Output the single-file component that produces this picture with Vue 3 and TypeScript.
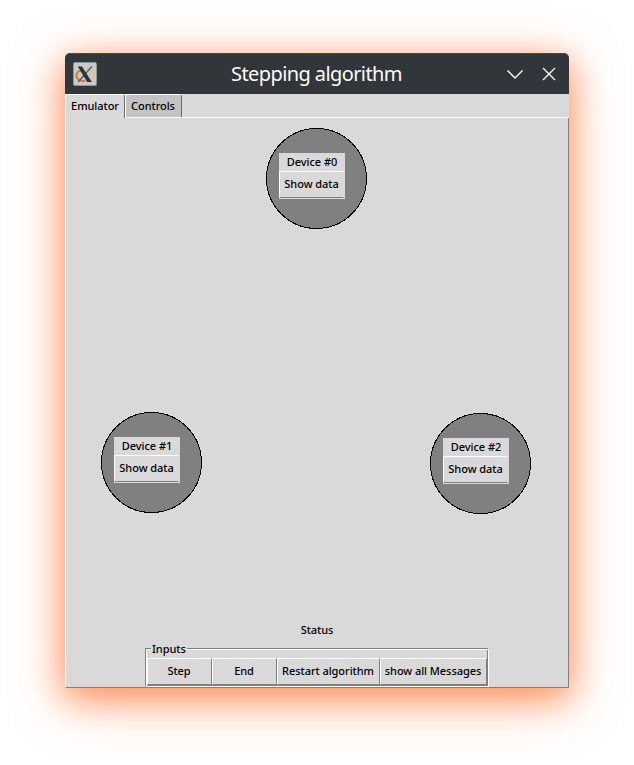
<script setup lang="ts">
import { ref } from 'vue'

interface Device { id: number; x: number; y: number }

const tabs: string[] = ['Emulator', 'Controls']
const active = ref(0)
const devices: Device[] = [
  { id: 0, x: 200, y: 10 },
  { id: 1, x: 35, y: 294 },
  { id: 2, x: 364, y: 295 },
]
const inputs = [
  { label: 'Step', kind: 'short' },
  { label: 'End', kind: 'short' },
  { label: 'Restart algorithm', kind: 'medium' },
  { label: 'show all Messages', kind: 'long' },
]
</script>

<template>
  <main class="desktop">
    <section class="window">
      <header class="titlebar">
        <svg class="logo" viewBox="0 0 24 24">
          <rect x=".5" y=".5" width="23" height="23" rx="1.5" fill="#c5cacd" stroke="#8e9599" />
          <path d="M11 7.800C6 8.200 3.300 10.500 3.300 13.500C3.300 17.300 7 19.300 12 19" fill="none" stroke="#ee6528" stroke-width="1.800" />
          <path d="M12 19C17 18.700 21.300 16.500 21.200 12.800C21 9.500 17.500 7.800 13 7.600" fill="none" stroke="#eebd78" stroke-width="1.500" />
          <path d="M18.800 4.500L5.200 20" stroke="#555b5e" stroke-width="1.300" />
          <path d="M4.800 4.500H9L18.800 20H14.200Z" fill="#2d3235" />
        </svg>
        <h1 class="title">Stepping algorithm</h1>
        <svg class="control" viewBox="0 0 18 18"><path d="M1.500 5.500L9 13L16.500 5.500" /></svg>
        <svg class="control close" viewBox="0 0 18 18"><path d="M3 3L15 15M15 3L3 15" /></svg>
      </header>
      <nav class="tabs">
        <button v-for="(tab, i) in tabs" :key="tab" class="tab" :class="{ active: active === i }" @click="active = i">{{ tab }}</button>
        <span class="rest"></span>
      </nav>
      <div class="pane">
        <div class="canvas">
          <div v-for="d in devices" :key="d.id" class="device" :style="{ left: d.x + 'px', top: d.y + 'px' }">
            <svg class="disc" viewBox="0 0 101 101" shape-rendering="crispEdges">
              <circle cx="50.5" cy="50.5" r="50" fill="#808080" stroke="#000" />
            </svg>
            <div class="card">
              <span class="name">Device #{{ d.id }}</span>
              <button class="show">Show data</button>
            </div>
          </div>
        </div>
        <div class="status">Status</div>
        <div class="inputs">
          <span class="legend">Inputs</span>
          <div class="row">
            <button v-for="b in inputs" :key="b.label" class="action" :class="b.kind">{{ b.label }}</button>
          </div>
        </div>
      </div>
    </section>
  </main>
</template>

<style>
body { background: #fff; }
</style>

<style scoped>
* { box-sizing: border-box; }
.desktop {
  height: 765px;
  padding: 53px 65px 0;
  overflow: hidden;
  font: 500 11px "Noto Sans", sans-serif;
  letter-spacing: -.06px;
  color: #000;
}
.window {
  width: 504px;
  height: 635px;
  display: flex;
  flex-direction: column;
  border-radius: 5px 5px 0 0;
  background: #d9d9d9;
  box-shadow: 0 12px 50px rgba(255, 98, 20, .5), 0 8px 30px rgba(255, 98, 20, .45);
}
button { font: inherit; letter-spacing: inherit; color: inherit; padding: 0; margin: 0; border-radius: 0; white-space: nowrap; }
.titlebar {
  height: 41px;
  flex: none;
  display: flex;
  align-items: center;
  padding: 0 11px 0 8px;
  background: #31363b;
  border-top: 1px solid #454a50;
  border-radius: 5px 5px 0 0;
}
.logo { width: 24px; height: 24px; }
.title {
  flex: 1;
  margin: 0;
  padding-left: 30px;
  text-align: center;
  font-size: 20px;
  font-weight: 400;
  letter-spacing: -.6px;
  line-height: 38px;
  color: #fcfcfc;
}
.control { width: 18px; height: 18px; fill: none; stroke: #fcfcfc; stroke-width: 1.400; }
.close { margin-left: 16px; }
.tabs { height: 24px; flex: none; display: flex; }
.tab {
  width: 60px;
  background: #c3c3c3;
  border: 1px solid #fff;
  border-right-color: #696969;
  border-radius: 2px 3px 0 0;
  line-height: 20px;
}
.tab:not(.active) { width: 57px; padding-right: 1px; }
.tab.active { background: #d9d9d9; border-bottom: 0; padding-bottom: 1px; }
.rest { flex: 1; border-bottom: 1px solid #fff; }
.pane {
  flex: 1;
  display: flex;
  flex-direction: column;
  align-items: center;
  border: solid #808080;
  border-width: 0 1px 1px;
  border-left-color: #fff;
}
.canvas { position: relative; width: 100%; height: 503px; flex: none; }
.device { position: absolute; width: 101px; height: 101px; padding: 25px 0 0 13px; }
.disc { position: absolute; left: 0; top: 0; width: 101px; height: 101px; }
.card { position: relative; width: 66px; background: #d9d9d9; display: flex; flex-direction: column; }
.name { height: 18px; line-height: 18px; text-align: center; }
.show {
  height: 27px;
  margin-bottom: 1px;
  margin-right: 1px;
  background: #d9d9d9;
  border: 1px solid #fff;
  border-right-color: #d9d9d9;
  border-bottom-color: #808080;
  line-height: 23px;
  padding-bottom: 2px;
}
.status { height: 18px; line-height: 18px; }
.inputs {
  width: 344px;
  height: 39px;
  margin-top: 9px;
  border: 1px solid #808080;
  border-right-color: #fff;
  border-bottom-color: #fff;
  box-shadow: inset 1px 1px #fff, inset -1px -1px #808080;
}
.legend {
  display: block;
  width: 36px;
  height: 14px;
  margin: -7px 0 0 5px;
  padding-left: 1px;
  line-height: 14px;
  background: #d9d9d9;
}
.row { display: flex; height: 27px; margin: 2px 1px 0; }
.action {
  height: 27px;
  background: #d9d9d9;
  border: 1px solid #fff;
  border-right-color: #808080;
  border-bottom-color: #808080;
  line-height: 23px;
  padding-bottom: 2px;
}
.short { width: 65px; padding-right: 1px; }
.medium { width: 103px; padding-right: 1px; }
.long { width: 107px; padding-right: 1px; }
</style>
